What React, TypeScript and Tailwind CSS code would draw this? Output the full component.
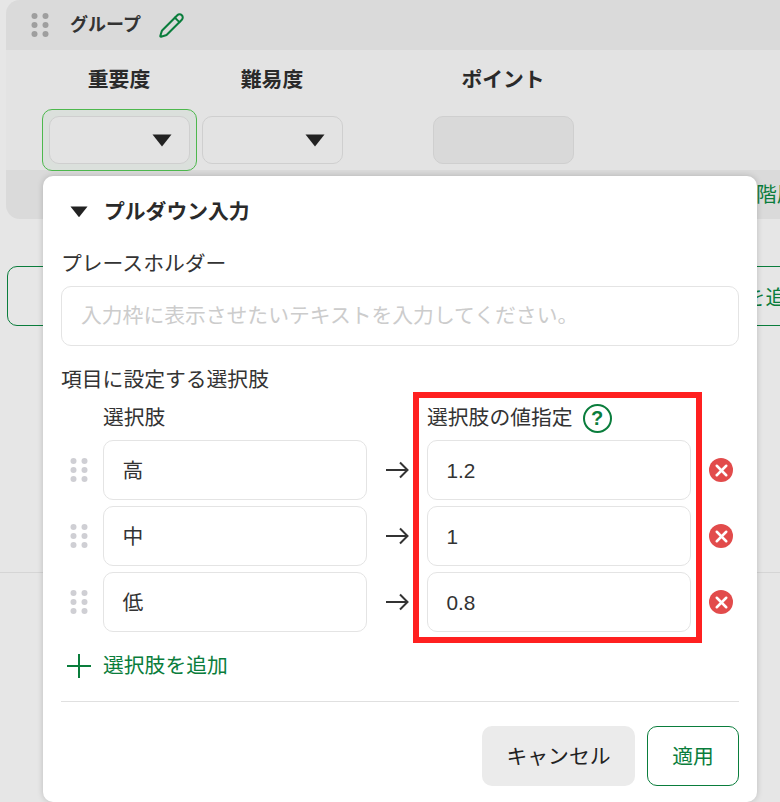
import { Pencil, X } from 'lucide-react';

const choices = [
  { label: '高', value: '1.2' },
  { label: '中', value: '1' },
  { label: '低', value: '0.8' },
];

const DragDots = ({ className }: { className: string }) => (
  <svg width="18" height="24" viewBox="0 0 18 24" className={className}>
    {[3, 12, 21].map((cy) => (
      <g key={cy}>
        <circle cx="3.5" cy={cy} r="3" />
        <circle cx="14.5" cy={cy} r="3" />
      </g>
    ))}
  </svg>
);

const Caret = ({ className }: { className: string }) => (
  <svg viewBox="0 0 20 13" className={className}>
    <path d="M0.5 0.5H19.5L10 12.5Z" fill="#222222" />
  </svg>
);

const TextBox = ({ value, width }: { value: string; width: string }) => (
  <div className={`${width} flex h-[60px] items-center rounded-[10px] border border-[#e4e4e4] bg-white pl-[18.5px] pt-[2px] text-[#333333]`}>
    {value}
  </div>
);

const ChoiceRow = ({ label, value }: { label: string; value: string }) => (
  <div className="flex items-center">
    <DragDots className="ml-[9px] fill-[#cfcfd4]" />
    <div className="ml-[15px]">
      <TextBox value={label} width="w-[264px]" />
    </div>
    <svg width="24" height="18" viewBox="0 0 24 18" fill="none" stroke="#333333" strokeWidth="2" className="mx-[18px] shrink-0">
      <path d="M1 9H22.5M15 1.5L22.5 9L15 16.5" />
    </svg>
    <TextBox value={value} width="w-[264px]" />
    <div className="ml-[18px] flex h-[24px] w-[24px] items-center justify-center rounded-full bg-[#e24b4b]">
      <X size={19} strokeWidth={3.2} className="text-white" />
    </div>
  </div>
);

export default function App() {
  return (
    <div
      className="relative h-[802px] w-[780px] overflow-hidden bg-[#e6e6e6] text-[20.8px]"
      style={{ fontFamily: '"Liberation Sans", "Noto Sans CJK JP", sans-serif' }}
    >
      {/* 背景のページ */}
      <div className="ml-[6px] h-[219px] w-[900px] overflow-hidden rounded-[14px] bg-[#e3e3e3]">
        <div className="flex h-[50px] items-center bg-[#dadada]">
          <DragDots className="ml-[25px] fill-[#9e9e9e]" />
          <span className="ml-[21px] text-[18px] font-bold text-[#333333]">グループ</span>
          <Pencil size={27} strokeWidth={1.8} className="ml-[17px] text-[#0a7d3c]" />
        </div>
        <div className="h-[120px]">
          <div className="ml-[35.5px] flex pt-[17px] font-bold leading-[26px] text-[#2a2a2a]">
            <div className="w-[155px] text-center">重要度</div>
            <div className="ml-[5px] w-[141px] text-center">難易度</div>
            <div className="ml-[90px] w-[141px] text-center">ポイント</div>
          </div>
          <div className="ml-[36px] mt-[16px] flex items-center">
            <div className="flex h-[62px] w-[155px] items-center justify-center rounded-[10px] border border-[#4db84d] bg-[#dbe0dc]">
              <div className="flex h-[48px] w-[141px] items-center justify-end rounded-[10px] border border-[#cfcfcf] bg-[#e3e3e3] pr-[17px]">
                <Caret className="w-[20px]" />
              </div>
            </div>
            <div className="ml-[5px] flex h-[48px] w-[141px] items-center justify-end rounded-[10px] border border-[#cfcfcf] pr-[17px]">
              <Caret className="w-[20px]" />
            </div>
            <div className="ml-[90px] h-[48px] w-[141px] rounded-[10px] border border-[#cfcfcf] bg-[#d9d9d9]" />
          </div>
        </div>
        <div className="h-[49px] whitespace-nowrap bg-[#dadada] pl-[750px] pt-[9px] text-[#0a7d3c]">階層を追加</div>
      </div>
      <div className="ml-[7px] mt-[47px] h-[60px] w-[900px] whitespace-nowrap rounded-[10px] border border-[#0a7d3c] pl-[695px] pt-[15px] text-[#0a7d3c]">
        項目を追加
      </div>
      <div className="mt-[246px] h-px w-full bg-[#d5d5d5]" />

      {/* モーダル */}
      <div className="absolute left-[43px] top-[176px] h-[626px] w-[714px] rounded-[10px] bg-white px-[18px] shadow-[0_0_6px_rgba(0,0,0,0.18)]">
        <div className="flex h-[71px] items-center pl-[9px]">
          <Caret className="w-[18px]" />
          <span className="ml-[16px] font-bold text-[#2a2a2a]">プルダウン入力</span>
        </div>
        <div className="leading-[34px] text-[#333333]">プレースホルダー</div>
        <div className="mt-[5px] flex h-[60px] items-center rounded-[10px] border border-[#e4e4e4] pl-[19px] text-[#cccccc]">
          入力枠に表示させたいテキストを入力してください。
        </div>
        <div className="mt-[17px] leading-[34px] text-[#333333]">項目に設定する選択肢</div>
        <div className="mt-[7px] flex h-[28px] items-center text-[#333333]">
          <span className="ml-[42px] w-[324px]">選択肢</span>
          <span>選択肢の値指定</span>
          <span className="ml-[10px] flex h-[29px] w-[29px] items-center justify-center rounded-full border-2 border-[#0a7d3c] text-[20px] font-bold text-[#0a7d3c]">
            ?
          </span>
        </div>
        <div className="mt-[8px] flex flex-col gap-[6px]">
          {choices.map((c) => (
            <ChoiceRow key={c.label} label={c.label} value={c.value} />
          ))}
        </div>
        <div className="mt-[19px] flex h-[30px] items-center text-[#0a7d3c]">
          <svg width="24" height="24" viewBox="0 0 24 24" stroke="currentColor" strokeWidth="2" className="ml-[6px]">
            <path d="M0 12H24M12 0V24" />
          </svg>
          <span className="ml-[12px]">選択肢を追加</span>
        </div>
        <div className="mt-[20px] h-px bg-[#e0e0e0]" />
        <div className="mt-[24px] flex justify-end gap-[12px]">
          <div className="flex h-[60px] w-[153px] items-center justify-center rounded-[10px] bg-[#ebebeb] pt-[2px] text-[#222222]">キャンセル</div>
          <div className="flex h-[60px] w-[92px] items-center justify-center rounded-[10px] border border-[#0a7d3c] pt-[2px] text-[#0a7d3c]">適用</div>
        </div>
      </div>

      {/* 注釈の赤枠 */}
      <div className="absolute left-[413px] top-[392px] h-[251px] w-[289px] border-[6px] border-[#ff2020]" />
    </div>
  );
}
